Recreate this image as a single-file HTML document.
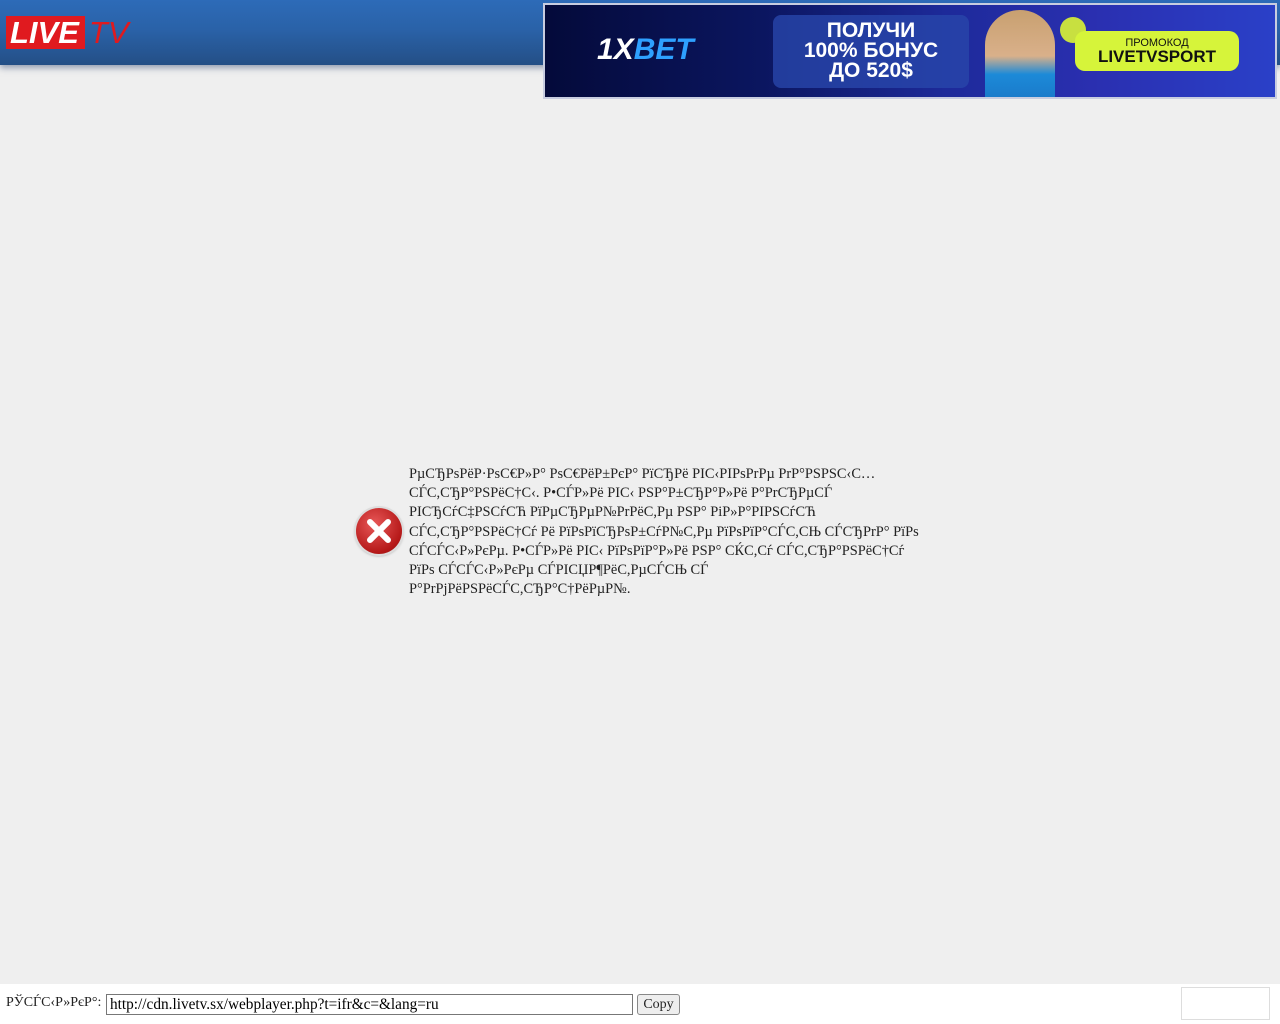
<!DOCTYPE html>
<html><head><meta charset="utf-8"><style>
body{margin:0;width:1280px;height:1024px;background:#efefef;position:relative;overflow:hidden;font-family:"Liberation Serif",serif}
#hdr{position:absolute;left:0;top:0;width:1280px;height:65px;background:linear-gradient(#2d6bb8,#2a62a8 45%,#244f86);box-shadow:0 3px 6px rgba(60,80,120,.5)}
#logo{position:absolute;left:6px;top:15px;font:italic bold 31px "Liberation Sans",sans-serif}
#logo .l{background:#e01a1f;color:#fff;padding:0 6px 0 4px;display:inline-block;height:33px;line-height:33px}
#logo .t{color:#e01a1f;font-weight:normal;margin-left:4px}
#ban{position:absolute;left:543px;top:3px;width:730px;height:92px;border:2px solid #c8cde0;background:linear-gradient(90deg,#040a3a 0%,#0b1660 30%,#1d2a9a 55%,#2a2fb0 75%,#2a40c8 100%);overflow:hidden;font-family:"Liberation Sans",sans-serif}
.box{position:absolute;left:228px;top:10px;width:196px;height:73px;border-radius:8px;background:rgba(40,70,170,.8);color:#fff;text-align:center;font:bold 21px/20px "Liberation Sans",sans-serif;padding-top:6px;box-sizing:border-box}
.promo{position:absolute;left:530px;top:26px;width:164px;height:40px;border-radius:10px;background:#d6f43a;color:#111;text-align:center;font-size:11px;line-height:13px;padding-top:6px;box-sizing:border-box}
.promo b{font-size:17px;display:block}
#err{position:absolute;left:356px;top:508px;width:46px;height:46px;border-radius:50%;background:radial-gradient(circle at 40% 35%,#e85858,#b51818 70%,#8a0d0d);box-shadow:0 0 0 2px #ddd,0 1px 3px #666}
#msg{position:absolute;left:409px;top:465px;width:520px;font-size:14.4px;line-height:19.2px;color:#222;white-space:nowrap}
#bot{position:absolute;left:0;top:984px;width:1280px;height:40px;background:#fff;font-size:14px;color:#222}
#bot .lab{position:absolute;left:6px;top:11px}
#bot input{position:absolute;left:106px;top:10px;width:527px;height:21px;box-sizing:border-box;border:1px solid #777;font:15.3px "Liberation Serif",serif;padding:0 3px}
#bot .btn{position:absolute;left:637px;top:10px;width:43px;height:21px;box-sizing:border-box;border:1px solid #888;border-radius:3px;background:#eee;text-align:center;line-height:19px}
#bot .sq{position:absolute;left:1181px;top:3px;width:87px;height:31px;border:1px solid #ddd}
</style></head><body>
<div id="hdr"><div id="logo"><span class="l">LIVE</span><span class="t">TV</span></div></div>
<div id="ban">
<div style="position:absolute;left:52px;top:28px;color:#fff;font:italic 900 30px 'Liberation Sans',sans-serif">1X<span style="color:#2ea0ff">BET</span></div>
<div class="box">ПОЛУЧИ<br>100% БОНУС<br>ДО 520$</div>
<div style="position:absolute;left:440px;top:5px;width:70px;height:92px;border-radius:35px 35px 0 0;background:linear-gradient(#c8a070,#d9b08a 50%,#1c8ad8 70%,#1a78c8)"></div>
<div style="position:absolute;left:515px;top:12px;width:26px;height:26px;border-radius:50%;background:#c8e040"></div>
<div class="promo">ПРОМОКОД<b>LIVETVSPORT</b></div>
</div>
<div id="err"><svg width="46" height="46" viewBox="0 0 46 46"><path d="M14 14L32 32M32 14L14 32" stroke="#fff" stroke-width="6" stroke-linecap="round"/></svg></div>
<div id="msg">PµCЂPsPëP·PsC€P»P° PsC€PëP±PєP° PïCЂPë PIC‹PIPsPrPµ PrP°PSPSC‹C…<br>CЃC,CЂP°PSPëC†C‹. P•CЃP»Pë PIC‹ PSP°P±CЂP°P»Pë P°PrCЂPµCЃ<br>PICЂCѓC‡PSCѓCЋ PïPµCЂPµP№PrPëC,Pµ PSP° PiP»P°PIPSCѓCЋ<br>CЃC,CЂP°PSPëC†Cѓ Pë PïPsPïCЂPsP±CѓP№C,Pµ PïPsPïP°CЃC,CЊ CЃCЂPrP° PïPs<br>CЃCЃC‹P»PєPµ. P•CЃP»Pë PIC‹ PïPsPïP°P»Pë PSP° CЌC,Cѓ CЃC,CЂP°PSPëC†Cѓ<br>PïPs CЃCЃC‹P»PєPµ CЃPICЏP¶PëC,PµCЃCЊ CЃ<br>P°PrPjPëPSPëCЃC,CЂP°C†PëPµP№.</div>
<div id="bot"><span class="lab">РЎСЃС‹Р»РєР°:</span><input value="http://cdn.livetv.sx/webplayer.php?t=ifr&amp;c=&amp;lang=ru"><div class="btn">Copy</div><div class="sq"></div></div>
</body></html>
